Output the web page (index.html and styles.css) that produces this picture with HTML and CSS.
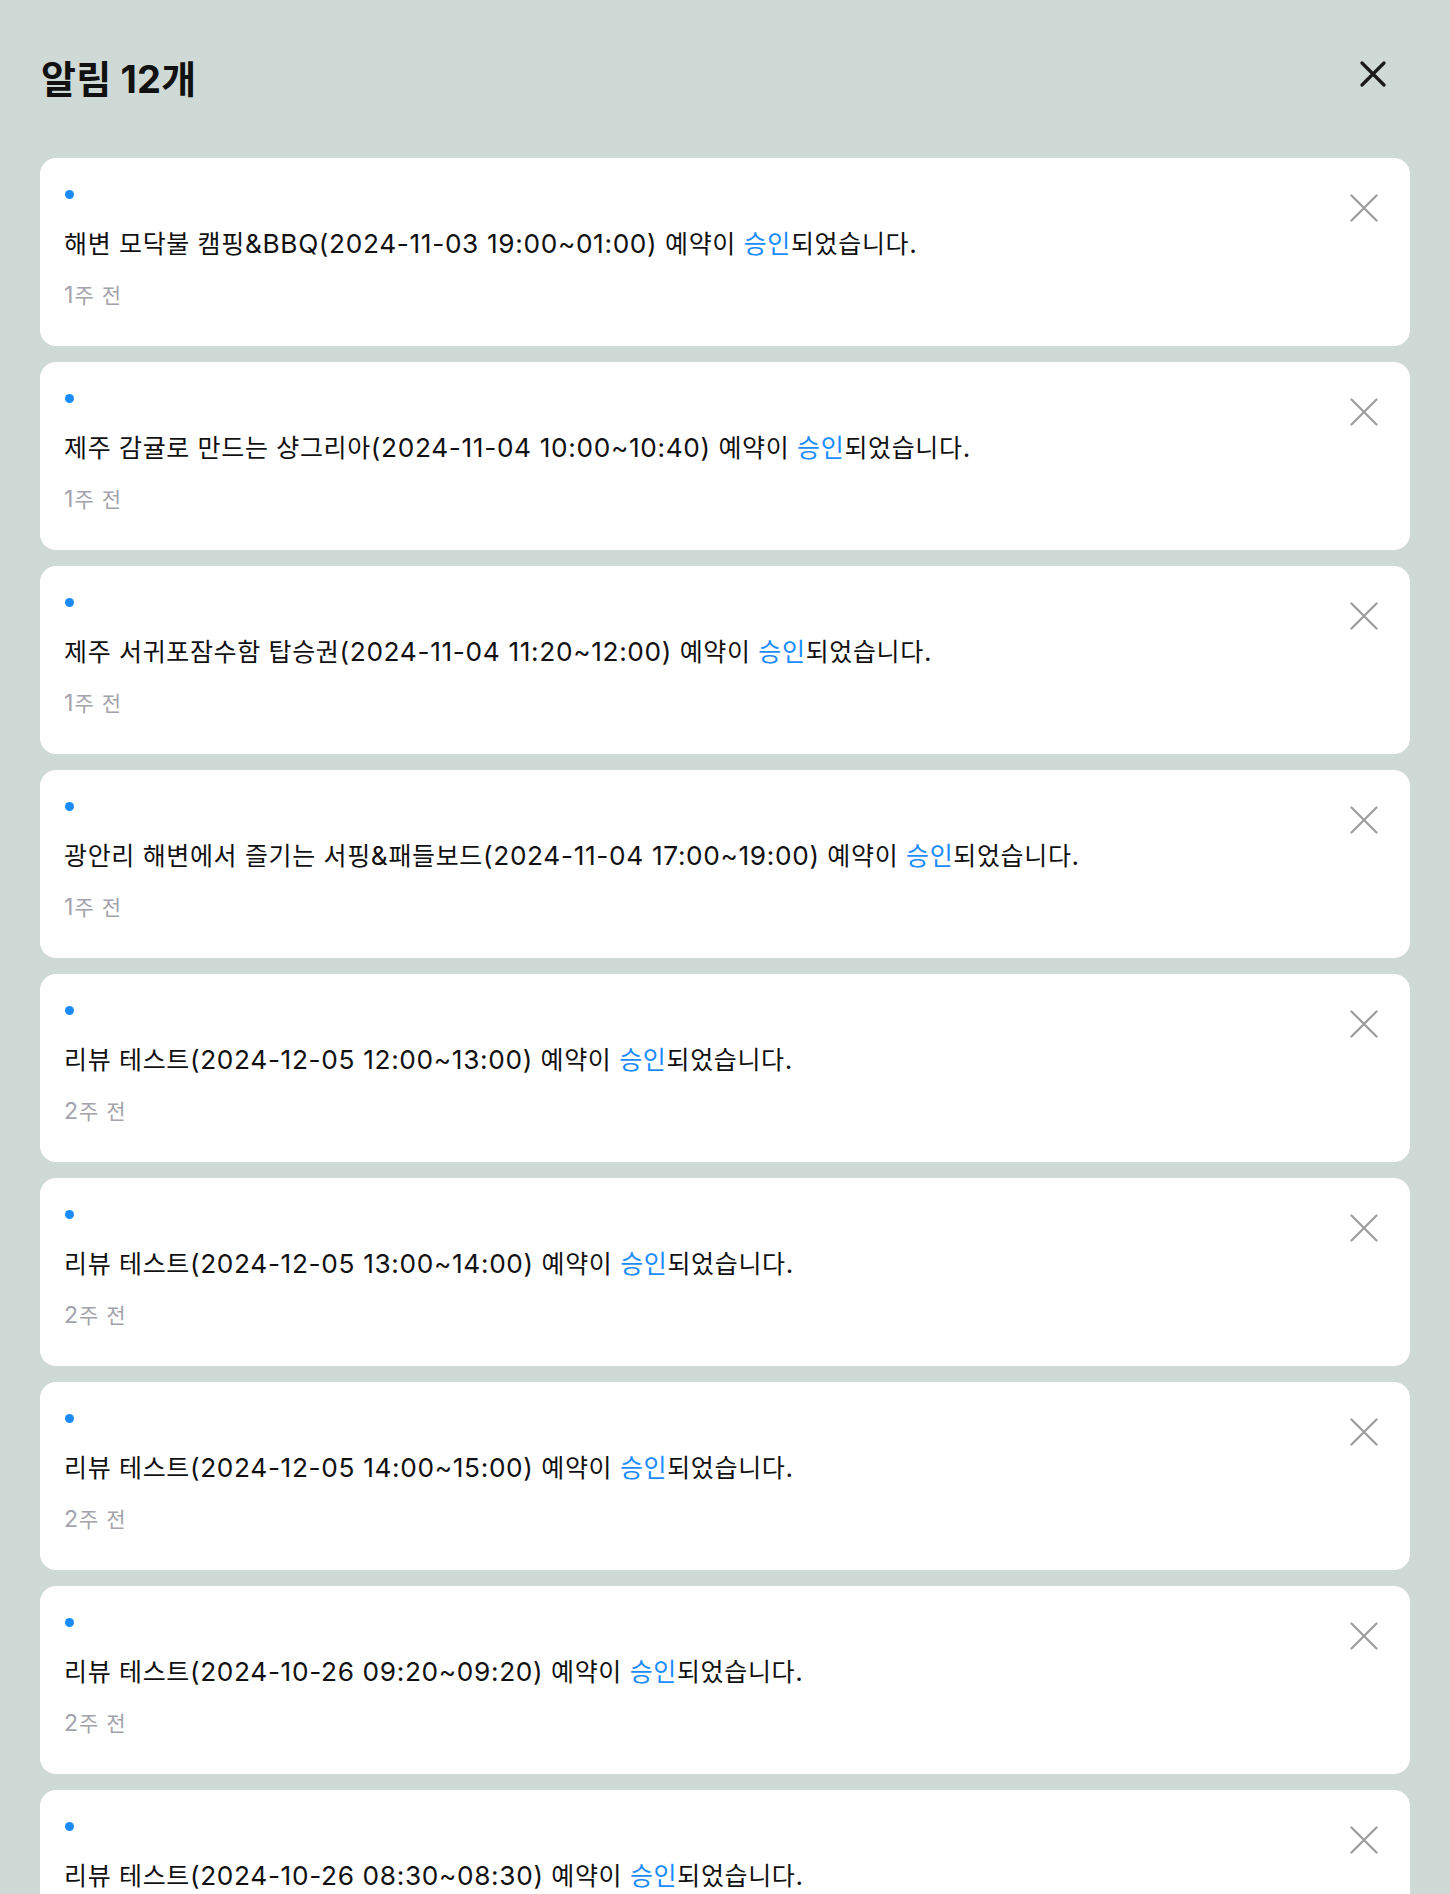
FILE: index.html
```html
<!DOCTYPE html>
<html lang="ko">
<head>
<meta charset="utf-8">
<title>알림</title>
<link rel="stylesheet" href="styles.css">
</head>
<body>
<div class="panel">
  <header class="header">
    <h1 class="title">알림 <span class="lat">12</span>개</h1>
    <button class="close-all" aria-label="닫기">
      <svg viewBox="0 0 26 26" width="26" height="26"><path d="M2 2L24 24M24 2L2 24" stroke="#1a1a1a" stroke-width="3.2" stroke-linecap="round" fill="none"/></svg>
    </button>
  </header>
  <ul class="list">
    <li class="card">
      <div class="content">
        <span class="dot"></span>
        <p class="msg">해변 모닥불 캠핑<span class="lat">&amp;BBQ(2024-11-03 19:00~01:00)</span> 예약이 <span class="hl">승인</span>되었습니다<span class="lat">.</span></p>
        <p class="time"><span class="lat">1</span>주 전</p>
      </div>
      <button class="remove" aria-label="삭제"><svg viewBox="0 0 28 28" width="28" height="28"><path d="M1.5 1.5L26.5 26.5M26.5 1.5L1.5 26.5" stroke="#9c9c9c" stroke-width="2.2" stroke-linecap="round" fill="none"/></svg></button>
    </li>
    <li class="card">
      <div class="content">
        <span class="dot"></span>
        <p class="msg">제주 감귤로 만드는 샹그리아<span class="lat">(2024-11-04 10:00~10:40)</span> 예약이 <span class="hl">승인</span>되었습니다<span class="lat">.</span></p>
        <p class="time"><span class="lat">1</span>주 전</p>
      </div>
      <button class="remove" aria-label="삭제"><svg viewBox="0 0 28 28" width="28" height="28"><path d="M1.5 1.5L26.5 26.5M26.5 1.5L1.5 26.5" stroke="#9c9c9c" stroke-width="2.2" stroke-linecap="round" fill="none"/></svg></button>
    </li>
    <li class="card">
      <div class="content">
        <span class="dot"></span>
        <p class="msg">제주 서귀포잠수함 탑승권<span class="lat">(2024-11-04 11:20~12:00)</span> 예약이 <span class="hl">승인</span>되었습니다<span class="lat">.</span></p>
        <p class="time"><span class="lat">1</span>주 전</p>
      </div>
      <button class="remove" aria-label="삭제"><svg viewBox="0 0 28 28" width="28" height="28"><path d="M1.5 1.5L26.5 26.5M26.5 1.5L1.5 26.5" stroke="#9c9c9c" stroke-width="2.2" stroke-linecap="round" fill="none"/></svg></button>
    </li>
    <li class="card">
      <div class="content">
        <span class="dot"></span>
        <p class="msg">광안리 해변에서 즐기는 서핑<span class="lat">&amp;</span>패들보드<span class="lat">(2024-11-04 17:00~19:00)</span> 예약이 <span class="hl">승인</span>되었습니다<span class="lat">.</span></p>
        <p class="time"><span class="lat">1</span>주 전</p>
      </div>
      <button class="remove" aria-label="삭제"><svg viewBox="0 0 28 28" width="28" height="28"><path d="M1.5 1.5L26.5 26.5M26.5 1.5L1.5 26.5" stroke="#9c9c9c" stroke-width="2.2" stroke-linecap="round" fill="none"/></svg></button>
    </li>
    <li class="card">
      <div class="content">
        <span class="dot"></span>
        <p class="msg">리뷰 테스트<span class="lat">(2024-12-05 12:00~13:00)</span> 예약이 <span class="hl">승인</span>되었습니다<span class="lat">.</span></p>
        <p class="time"><span class="lat">2</span>주 전</p>
      </div>
      <button class="remove" aria-label="삭제"><svg viewBox="0 0 28 28" width="28" height="28"><path d="M1.5 1.5L26.5 26.5M26.5 1.5L1.5 26.5" stroke="#9c9c9c" stroke-width="2.2" stroke-linecap="round" fill="none"/></svg></button>
    </li>
    <li class="card">
      <div class="content">
        <span class="dot"></span>
        <p class="msg">리뷰 테스트<span class="lat">(2024-12-05 13:00~14:00)</span> 예약이 <span class="hl">승인</span>되었습니다<span class="lat">.</span></p>
        <p class="time"><span class="lat">2</span>주 전</p>
      </div>
      <button class="remove" aria-label="삭제"><svg viewBox="0 0 28 28" width="28" height="28"><path d="M1.5 1.5L26.5 26.5M26.5 1.5L1.5 26.5" stroke="#9c9c9c" stroke-width="2.2" stroke-linecap="round" fill="none"/></svg></button>
    </li>
    <li class="card">
      <div class="content">
        <span class="dot"></span>
        <p class="msg">리뷰 테스트<span class="lat">(2024-12-05 14:00~15:00)</span> 예약이 <span class="hl">승인</span>되었습니다<span class="lat">.</span></p>
        <p class="time"><span class="lat">2</span>주 전</p>
      </div>
      <button class="remove" aria-label="삭제"><svg viewBox="0 0 28 28" width="28" height="28"><path d="M1.5 1.5L26.5 26.5M26.5 1.5L1.5 26.5" stroke="#9c9c9c" stroke-width="2.2" stroke-linecap="round" fill="none"/></svg></button>
    </li>
    <li class="card">
      <div class="content">
        <span class="dot"></span>
        <p class="msg">리뷰 테스트<span class="lat">(2024-10-26 09:20~09:20)</span> 예약이 <span class="hl">승인</span>되었습니다<span class="lat">.</span></p>
        <p class="time"><span class="lat">2</span>주 전</p>
      </div>
      <button class="remove" aria-label="삭제"><svg viewBox="0 0 28 28" width="28" height="28"><path d="M1.5 1.5L26.5 26.5M26.5 1.5L1.5 26.5" stroke="#9c9c9c" stroke-width="2.2" stroke-linecap="round" fill="none"/></svg></button>
    </li>
    <li class="card">
      <div class="content">
        <span class="dot"></span>
        <p class="msg">리뷰 테스트<span class="lat">(2024-10-26 08:30~08:30)</span> 예약이 <span class="hl">승인</span>되었습니다<span class="lat">.</span></p>
        <p class="time"><span class="lat">2</span>주 전</p>
      </div>
      <button class="remove" aria-label="삭제"><svg viewBox="0 0 28 28" width="28" height="28"><path d="M1.5 1.5L26.5 26.5M26.5 1.5L1.5 26.5" stroke="#9c9c9c" stroke-width="2.2" stroke-linecap="round" fill="none"/></svg></button>
    </li>
    <li class="card">
      <div class="content">
        <span class="dot"></span>
        <p class="msg">리뷰 테스트<span class="lat">(2024-10-25 10:00~11:00)</span> 예약이 <span class="hl">승인</span>되었습니다<span class="lat">.</span></p>
        <p class="time"><span class="lat">2</span>주 전</p>
      </div>
      <button class="remove" aria-label="삭제"><svg viewBox="0 0 28 28" width="28" height="28"><path d="M1.5 1.5L26.5 26.5M26.5 1.5L1.5 26.5" stroke="#9c9c9c" stroke-width="2.2" stroke-linecap="round" fill="none"/></svg></button>
    </li>
    <li class="card">
      <div class="content">
        <span class="dot"></span>
        <p class="msg">리뷰 테스트<span class="lat">(2024-10-25 09:00~10:00)</span> 예약이 <span class="hl">승인</span>되었습니다<span class="lat">.</span></p>
        <p class="time"><span class="lat">2</span>주 전</p>
      </div>
      <button class="remove" aria-label="삭제"><svg viewBox="0 0 28 28" width="28" height="28"><path d="M1.5 1.5L26.5 26.5M26.5 1.5L1.5 26.5" stroke="#9c9c9c" stroke-width="2.2" stroke-linecap="round" fill="none"/></svg></button>
    </li>
    <li class="card">
      <div class="content">
        <span class="dot"></span>
        <p class="msg">리뷰 테스트<span class="lat">(2024-10-24 14:00~15:00)</span> 예약이 <span class="hl">승인</span>되었습니다<span class="lat">.</span></p>
        <p class="time"><span class="lat">3</span>주 전</p>
      </div>
      <button class="remove" aria-label="삭제"><svg viewBox="0 0 28 28" width="28" height="28"><path d="M1.5 1.5L26.5 26.5M26.5 1.5L1.5 26.5" stroke="#9c9c9c" stroke-width="2.2" stroke-linecap="round" fill="none"/></svg></button>
    </li>
  </ul>
</div>
</body>
</html>
```

FILE: styles.css
```css
* { box-sizing: border-box; }
html, body {
  margin: 0;
  padding: 0;
  height: 100%;
  background: #cfd9d6;
  font-family: Inter, "Noto Sans CJK KR", "Noto Sans", sans-serif;
  color: #111111;
}
.panel {
  height: 100vh;
  display: flex;
  flex-direction: column;
  padding: 0 40px;
  overflow: hidden;
}
.header {
  display: flex;
  justify-content: space-between;
  align-items: flex-start;
  padding: 57px 0 57px 1px;
  flex: none;
}
.title {
  margin: 0;
  font-size: 38px;
  line-height: 44px;
  font-weight: 700;
  letter-spacing: 0.2px;
  color: #111111;
}
.lat { line-height: 1; }
.title .lat { font-size: 1em; }
.msg .lat { font-size: 1.05em; }
.time .lat { font-size: 1.1em; }
.close-all {
  margin: 4px 24px 0 0;
  padding: 0;
  border: 0;
  background: none;
  width: 26px;
  height: 26px;
  display: block;
}
.close-all svg, .remove svg { display: block; }
.list {
  list-style: none;
  margin: 0;
  padding: 0;
  flex: 1;
  min-height: 0;
  overflow-y: auto;
  scrollbar-width: none;
  display: flex;
  flex-direction: column;
  gap: 16px;
}
.card {
  flex: none;
  background: #ffffff;
  border-radius: 16px;
  display: flex;
  align-items: flex-start;
  padding: 32px 32px 35px 24px;
}
.content {
  flex: 1;
  display: flex;
  flex-direction: column;
  align-items: flex-start;
}
.dot {
  width: 9px;
  height: 9px;
  border-radius: 50%;
  background: #1a8cff;
  margin-left: 0.5px;
}
.msg {
  margin: 27px 0 0;
  font-size: 25px;
  line-height: 36px;
  letter-spacing: 0.65px;
  color: #111111;
}
.hl { color: #1a8cff; }
.time {
  margin: 19px 0 0;
  font-size: 21px;
  line-height: 30px;
  letter-spacing: 1px;
  color: #a3a3ab;
}
.remove {
  flex: none;
  margin-top: 4px;
  padding: 0;
  border: 0;
  background: none;
  width: 28px;
  height: 28px;
}
```
